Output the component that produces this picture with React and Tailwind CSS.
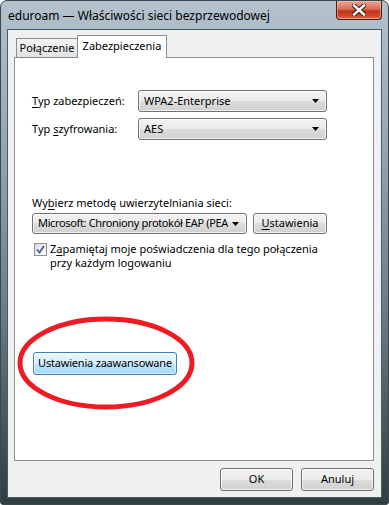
import React from "react";

const font = { fontFamily: '"Noto Sans", "Open Sans", sans-serif' };

// przycisk w stylu Win7
const btn =
  "flex items-center justify-center border border-[#707070] rounded-[3px] bg-[linear-gradient(to_bottom,#f2f2f2_0%,#ebebeb_50%,#dddddd_50%,#cfcfcf_100%)] shadow-[inset_0_0_0_1px_rgba(255,255,255,0.7)] text-black";

function Arrow() {
  return (
    <svg width="7" height="4" viewBox="0 0 7 4" className="shrink-0">
      <path d="M0 0H7L3.5 4Z" fill="#000" />
    </svg>
  );
}

function Select({ value, className }) {
  return (
    <div className={`${btn} gap-[4px] pl-[5px] pr-[7px] ${className}`}>
      <span className="flex-1 min-w-0 whitespace-nowrap overflow-hidden">{value}</span>
      <Arrow />
    </div>
  );
}

function CloseButton() {
  return (
    <div className="w-[46px] h-[19px] rounded-b-[4px] border border-t-0 border-[#4a1d14] bg-[linear-gradient(to_bottom,#e7a797_0%,#d86f55_45%,#c1321a_55%,#cf4a2c_85%,#e07a5c_100%)] shadow-[inset_0_0_0_1px_rgba(255,200,180,0.5)] flex items-center justify-center">
      <svg width="14" height="12" viewBox="0 0 14 12">
        <path d="M2 1.5L12 10.5M12 1.5L2 10.5" stroke="#3a1a14" strokeWidth="4.5" strokeLinecap="square" />
        <path d="M2 1.5L12 10.5M12 1.5L2 10.5" stroke="#ffffff" strokeWidth="2.5" strokeLinecap="square" />
      </svg>
    </div>
  );
}

export default function App() {
  return (
    <div
      style={font}
      className="w-[389px] h-[505px] flex flex-col rounded-t-[7px] rounded-b-[3px] border border-[#3b4850] bg-[linear-gradient(to_bottom,#b3c2cd_0%,#93a5b1_30%,#6c7e88_60%,#2f3f3f_100%)] overflow-hidden text-[11px] text-black"
    >
      {/* pasek tytułu */}
      <div className="h-[28px] flex items-start shrink-0">
        <div className="pl-[7px] pt-[7px] text-[12px] leading-[16px] text-black">
          eduroam — Właściwości sieci bezprzewodowej
        </div>
        <div className="ml-auto mr-[6px]">
          <CloseButton />
        </div>
      </div>

      {/* obszar klienta */}
      <div className="flex-1 mx-[6px] mb-[6px] border border-[#4c5b63] bg-[#f0f0f0] flex flex-col pt-[6px] pl-[6px] pr-[7px]">
        {/* zakładki */}
        <div className="flex items-end h-[21px] pl-[2px]">
          <div className="w-[62px] h-[19px] border border-b-0 border-[#898c95] bg-[linear-gradient(to_bottom,#f4f4f4,#e2e2e2)] flex items-center justify-center pt-[1px]">
            Połączenie
          </div>
          <div className="relative z-10 -ml-px w-[90px] h-[23px] -mb-px border border-b-0 border-[#898c95] bg-white flex items-start justify-center pt-[2px]">
            Zabezpieczenia
          </div>
        </div>

        {/* panel */}
        <div className="h-[404px] border border-[#898c95] bg-white pt-[32px] pl-[17px] flex flex-col">
          <div className="flex items-center h-[22px]">
            <span className="w-[106px]">
              <span className="underline underline-offset-2">T</span>yp zabezpieczeń:
            </span>
            <Select value="WPA2-Enterprise" className="w-[189px] h-[22px]" />
          </div>
          <div className="flex items-center h-[22px] mt-[6px]">
            <span className="w-[106px]">
              Typ <span className="underline underline-offset-2">s</span>zyfrowania:
            </span>
            <Select value="AES" className="w-[189px] h-[22px]" />
          </div>

          <div className="mt-[55px] leading-[15px]">
            Wy<span className="underline underline-offset-2">b</span>ierz metodę uwierzytelniania sieci:
          </div>
          <div className="flex items-center gap-[6px] mt-[3px]">
            <Select value="Microsoft: Chroniony protokół EAP (PEA" className="w-[215px] h-[21px] tracking-[-0.35px]" />
            <div className={`${btn} w-[74px] h-[21px]`}>
              <span>
                <span className="underline underline-offset-2">U</span>stawienia
              </span>
            </div>
          </div>

          <div className="flex items-start mt-[8px] pl-[2px]">
            <div className="w-[13px] h-[13px] border border-[#8e8f8f] bg-[linear-gradient(to_bottom_right,#dcdcdc,#ffffff)] flex items-center justify-center shrink-0 mt-px">
              <svg width="9" height="9" viewBox="0 0 9 9">
                <path d="M1 4.5L3.5 7.5L8 1" stroke="#4a5e97" strokeWidth="1.8" fill="none" />
              </svg>
            </div>
            <div className="ml-[3px] leading-[14px]">
              Z<span className="underline underline-offset-2">a</span>pamiętaj moje poświadczenia dla tego połączenia
              <br />
              przy każdym logowaniu
            </div>
          </div>

          <div className="relative mt-[82px] w-[144px] h-[23px] ml-px">
            <div className="w-full h-full flex items-center justify-center rounded-[3px] border border-[#3c7fb1] bg-[linear-gradient(to_bottom,#eaf6fd_0%,#d9f0fc_50%,#bee6fd_50%,#a7d9f5_100%)] shadow-[inset_0_0_0_1px_rgba(255,255,255,0.6)] tracking-[-0.2px]">
              Ustawienia zaawansowane
            </div>
            <svg
              width="178"
              height="94"
              viewBox="0 0 178 94"
              className="absolute left-[-16px] top-[-36px] pointer-events-none"
            >
              <ellipse cx="89" cy="47" rx="86" ry="44" fill="none" stroke="#ed1c24" strokeWidth="5" />
            </svg>
          </div>
        </div>

        {/* przyciski dolne */}
        <div className="flex justify-end gap-[8px] mt-[7px]">
          <div className={`${btn} w-[73px] h-[23px]`}>OK</div>
          <div className={`${btn} w-[73px] h-[23px]`}>Anuluj</div>
        </div>
      </div>
    </div>
  );
}
